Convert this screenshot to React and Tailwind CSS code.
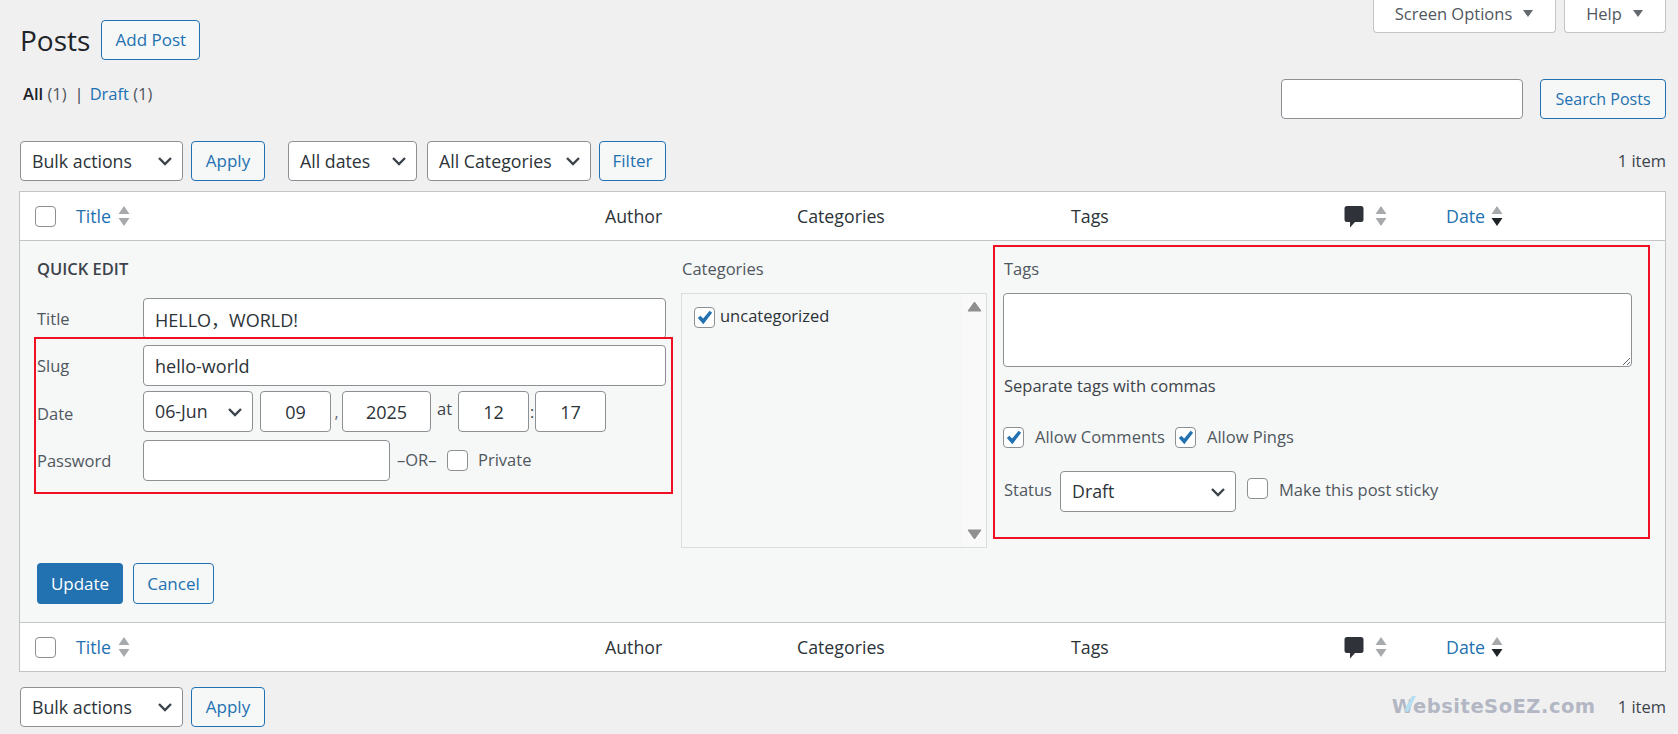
import React from 'react';

const FONT = "font-['Open_Sans','Noto_Sans_CJK_SC',sans-serif]";

function Btn({ className = '', children }) {
  return (
    <button className={`h-[40px] flex items-center justify-center rounded-[4px] border border-[#2271b1] bg-[#f6f7f7] text-[#2271b1] text-[17px] ${className}`}>
      {children}
    </button>
  );
}

function Chevron() {
  return (
    <svg width="20" height="20" viewBox="0 0 20 20" className="shrink-0">
      <path d="M4 7l6 6 6-6" fill="none" stroke="#3c434a" strokeWidth="2.4" />
    </svg>
  );
}

function Select({ label, className = '' }) {
  return (
    <div className={`h-[40px] flex items-center justify-between pl-[11px] pr-[7px] rounded-[4px] border border-[#8c8f94] bg-white text-[#2c3338] text-[17.75px] ${className}`}>
      <span className="whitespace-nowrap">{label}</span>
      <Chevron />
    </div>
  );
}

function Check({ checked, className = '' }) {
  return (
    <span className={`w-[21px] h-[21px] shrink-0 flex items-center justify-center rounded-[4px] border border-[#8c8f94] bg-white ${className}`}>
      {checked && (
        <svg width="19" height="19" viewBox="0 0 20 20">
          <path d="M3 10.5l2.6-2.4 3 3L15.4 3 18 5 8.8 17z" fill="#2271b1" />
        </svg>
      )}
    </span>
  );
}

function SortArrows({ active }) {
  return (
    <svg width="12" height="22" viewBox="0 0 12 22" className="shrink-0">
      <path d="M6 1l5.5 8H.5z" fill="#a7aaad" />
      <path d="M6 21L.5 13h11z" fill={active ? '#1d2327' : '#a7aaad'} />
    </svg>
  );
}

function CommentIcon() {
  return (
    <svg width="20" height="23" viewBox="0 0 20 23" className="shrink-0">
      <path d="M3 1h14a2.5 2.5 0 0 1 2.5 2.5v11A2.5 2.5 0 0 1 17 17h-6l-5 5.5V17H3a2.5 2.5 0 0 1-2.5-2.5v-11A2.5 2.5 0 0 1 3 1z" fill="#2f3238" />
    </svg>
  );
}

function HeaderRow() {
  return (
    <div className="h-[48px] grid grid-cols-[56px_529px_192px_274px_273px_102px_1fr] items-center bg-white text-[17.75px] text-[#2c3338]">
      <div className="pl-[15px]"><Check /></div>
      <div className="flex items-center gap-[7px] text-[#2271b1]">Title <SortArrows /></div>
      <div>Author</div>
      <div>Categories</div>
      <div>Tags</div>
      <div className="flex items-center gap-[11px]"><CommentIcon /><SortArrows /></div>
      <div className="flex items-center gap-[6px] text-[#2271b1]">Date <SortArrows active /></div>
    </div>
  );
}

function Field({ value = '', className = '' }) {
  return (
    <input
      defaultValue={value}
      className={`h-[41px] rounded-[4px] border border-[#8c8f94] bg-white text-[#2c3338] text-[18px] outline-none ${className}`}
    />
  );
}

function Row({ label, className = '', labelClass = 'pt-[2px]', children }) {
  return (
    <div className={`flex items-center ${className}`}>
      <span className={`w-[106px] shrink-0 text-[#50575e] text-[16.5px] ${labelClass}`}>{label}</span>
      {children}
    </div>
  );
}

function Watermark() {
  return (
    <div className="relative font-['DejaVu_Sans',sans-serif] font-bold text-[19.5px] tracking-[0.5px] text-[#b3b7c4] whitespace-nowrap">
      WebsiteSoEZ.com
      <svg width="16" height="18" viewBox="0 0 16 18" className="absolute left-[9px] top-[3px]">
        <path d="M3 16L11 1h4L7 17z" fill="#b5dff0" />
      </svg>
    </div>
  );
}

export default function App() {
  return (
    <div className={`relative w-full h-[734px] overflow-hidden bg-[#f0f0f1] text-[#3c434a] ${FONT}`}>
      {/* cabecera */}
      <div className="flex justify-between h-[141px] pl-[20px] pr-[12px]">
        <div>
          <div className="flex items-center gap-[11px] mt-[20px]">
            <h1 className="text-[28px] text-[#1d2327] leading-[40px]">Posts</h1>
            <Btn className="w-[99px]">Add Post</Btn>
          </div>
          <div className="mt-[22px] ml-[3px] text-[16.5px] leading-[24px]">
            <span className="font-semibold text-[#1d2327]">All</span>
            <span className="text-[#50575e]"> (1)</span>
            <span className="ml-[8px] mr-[6px] text-[#3c434a]">|</span>
            <span className="text-[#2271b1]">Draft</span>
            <span className="text-[#50575e]"> (1)</span>
          </div>
        </div>
        <div className="flex flex-col items-end">
          <div className="flex gap-[8px]">
            <div className="w-[183px] h-[33px] flex items-center justify-center gap-[10px] pb-[3px] rounded-b-[4px] border border-t-0 border-[#c3c4c7] bg-white text-[#50575e] text-[16.5px]">
              Screen Options
              <svg width="12" height="9" viewBox="0 0 12 9" className="-mt-[2px]"><path d="M1 1h10L6 8z" fill="#646970" /></svg>
            </div>
            <div className="w-[102px] h-[33px] flex items-center justify-center gap-[10px] pb-[3px] rounded-b-[4px] border border-t-0 border-[#c3c4c7] bg-white text-[#50575e] text-[16.5px]">
              Help
              <svg width="12" height="9" viewBox="0 0 12 9" className="-mt-[2px]"><path d="M1 1h10L6 8z" fill="#646970" /></svg>
            </div>
          </div>
          <div className="flex gap-[17px] mt-[46px]">
            <input className="w-[242px] h-[40px] rounded-[4px] border border-[#8c8f94] bg-white outline-none" />
            <button className="w-[126px] h-[40px] rounded-[4px] border border-[#2271b1] bg-[#f6f7f7] text-[#2271b1] text-[16px]">Search Posts</button>
          </div>
        </div>
      </div>

      {/* acciones */}
      <div className="flex items-center h-[40px] mb-[10px] pl-[20px] pr-[12px]">
        <Select label="Bulk actions" className="w-[163px]" />
        <Btn className="w-[74px] ml-[8px]">Apply</Btn>
        <Select label="All dates" className="w-[129px] ml-[23px]" />
        <Select label="All Categories" className="w-[164px] ml-[10px]" />
        <Btn className="w-[67px] ml-[8px]">Filter</Btn>
        <span className="ml-auto text-[16.5px]">1 item</span>
      </div>

      {/* tabla */}
      <div className="ml-[19px] w-[1647px] border border-[#c3c4c7]">
        <HeaderRow />
        <div className="relative h-[383px] border-y border-[#c3c4c7] bg-[#f6f7f7] pl-[17px]">
          <div className="flex gap-[15px] h-[307px]">
            <div className="w-[629px]">
              <div className="h-[54px] flex items-center pt-[2px] mb-[3px] font-semibold text-[16.5px] text-[#3c434a]">QUICK EDIT</div>
              <Row label="Title"><Field value="HELLO，WORLD!" className="w-[523px] pl-[11px]" /></Row>
              <Row label="Slug" className="mt-[6px]"><Field value="hello-world" className="w-[523px] pl-[11px]" /></Row>
              <Row label="Date" labelClass="pt-[5px]" className="mt-[5px]">
                <Select label="06-Jun" className="w-[110px] h-[41px]" />
                <Field value="09" className="w-[71px] ml-[7px] text-center" />
                <span className="w-[11px] text-center text-[#646970]">,</span>
                <Field value="2025" className="w-[89px] text-center" />
                <span className="w-[27px] text-center text-[16.5px] -mt-[4px]">at</span>
                <Field value="12" className="w-[71px] text-center" />
                <span className="w-[6px] text-center">:</span>
                <Field value="17" className="w-[71px] text-center" />
              </Row>
              <Row label="Password" className="mt-[8px]">
                <Field className="w-[247px]" />
                <span className="ml-[7px] w-[47px] text-[16.5px] text-[#50575e]">–OR–</span>
                <Check className="ml-[3px]" />
                <span className="ml-[10px] text-[16.5px] text-[#50575e]">Private</span>
              </Row>
            </div>

            <div className="w-[306px]">
              <div className="h-[52px] flex items-center pt-[4px] pl-[1px] text-[16.5px] text-[#50575e]">Categories</div>
              <div className="h-[255px] flex justify-between border border-[#dcdcde] bg-[#f6f7f7]">
                <div className="flex items-center gap-[5px] h-[21px] ml-[12px] mt-[13px] text-[16.5px] text-[#2c3338]">
                  <Check checked />
                  <span className="-mt-[2px]">uncategorized</span>
                </div>
                <div className="w-[23px] flex flex-col justify-between items-center py-[7px] bg-[#f9f9f9]">
                  <svg width="15" height="11" viewBox="0 0 15 11"><path d="M7.5 1L14 10H1z" fill="#8f8f8f" stroke="#8f8f8f" strokeLinejoin="round" /></svg>
                  <svg width="15" height="11" viewBox="0 0 15 11"><path d="M7.5 10L14 1H1z" fill="#8f8f8f" stroke="#8f8f8f" strokeLinejoin="round" /></svg>
                </div>
              </div>
            </div>

            <div className="w-[629px] ml-[1px]">
              <div className="h-[52px] flex items-center pt-[4px] pl-[1px] text-[16.5px] text-[#50575e]">Tags</div>
              <textarea className="block w-[629px] h-[74px] rounded-[4px] border border-[#8c8f94] bg-white outline-none" />
              <p className="mt-[7px] pl-[1px] text-[16.5px] leading-[24px] text-[#3c434a]">Separate tags with commas</p>
              <div className="flex items-center h-[21px] mt-[29px] text-[16.5px] text-[#50575e]">
                <Check checked />
                <span className="ml-[11px] w-[140px]">Allow Comments</span>
                <Check checked />
                <span className="ml-[11px]">Allow Pings</span>
              </div>
              <div className="flex items-center mt-[23px] text-[16.5px] text-[#50575e]">
                <span className="w-[57px] pl-[1px] -mt-[3px]">Status</span>
                <Select label="Draft" className="w-[176px] h-[41px]" />
                <Check className="ml-[11px] -mt-[6px]" />
                <span className="ml-[11px] -mt-[3px]">Make this post sticky</span>
              </div>
            </div>
          </div>

          <div className="flex gap-[10px] mt-[15px]">
            <button className="w-[86px] h-[41px] rounded-[4px] bg-[#2271b1] text-white text-[17px]">Update</button>
            <Btn className="w-[81px] h-[41px]">Cancel</Btn>
          </div>

          {/* marcos rojos de la captura */}
          <div className="absolute left-[14px] top-[96px] w-[639px] h-[157px] border-2 border-[#f00f23]" />
          <div className="absolute left-[973px] top-[4px] w-[657px] h-[294px] border-2 border-[#f00f23]" />
        </div>
        <HeaderRow />
      </div>

      {/* acciones inferiores */}
      <div className="flex items-center h-[40px] mt-[15px] pl-[20px] pr-[12px]">
        <Select label="Bulk actions" className="w-[163px]" />
        <Btn className="w-[74px] ml-[8px]">Apply</Btn>
        <div className="ml-auto mr-[22px]"><Watermark /></div>
        <span className="text-[16.5px]">1 item</span>
      </div>
    </div>
  );
}
